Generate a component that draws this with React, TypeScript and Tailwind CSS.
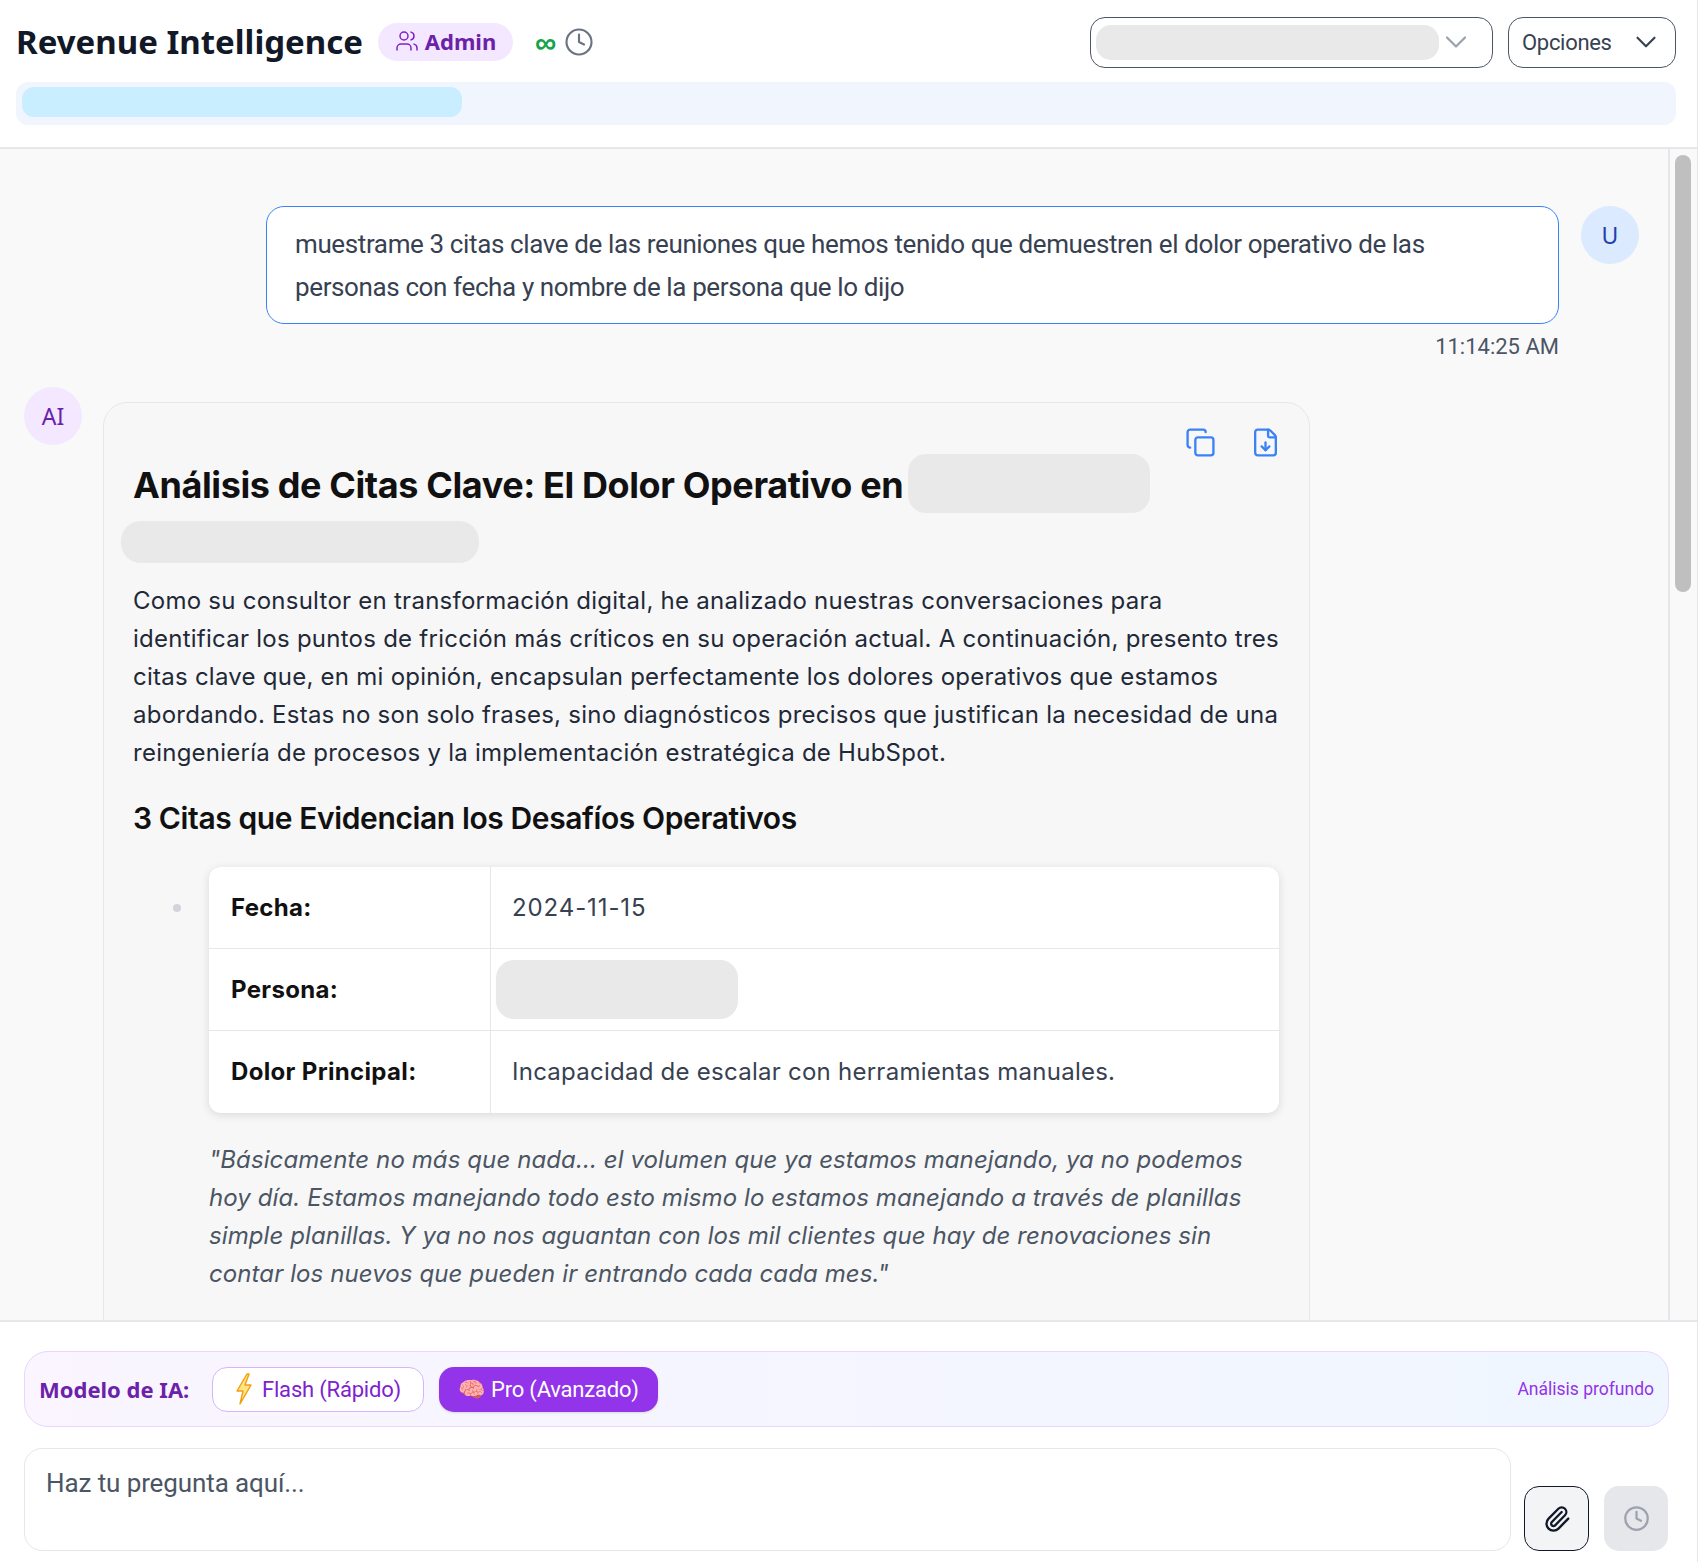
import { Users, ChevronDown, Clock, Paperclip, Copy, FileDown } from "lucide-react";

const ui = "font-['Noto_Sans',sans-serif]";
const narrow = "font-['Roboto',sans-serif]";

function Blur({ className }: { className: string }) {
  return <span className={`inline-block align-middle bg-[#e9e9e9] ${className}`} />;
}

function Row({ label, last, children }: { label: string; last?: boolean; children: React.ReactNode }) {
  return (
    <div className={`flex h-[82px] ${last ? "" : "border-b border-[#e5e7eb]"}`}>
      <div className="w-[282px] shrink-0 border-r border-[#e5e7eb] pl-[22px] flex items-center font-bold tracking-[0.014em] text-[#111111]">{label}</div>
      <div className="flex-1 flex items-center pl-[21px] text-[#374151]">{children}</div>
    </div>
  );
}

export default function App() {
  return (
    <div className="h-[1562px] w-[1698px] flex flex-col overflow-hidden bg-white rounded-tl-[12px] border-r border-[#e5e7eb]">
      <header className="h-[149px] shrink-0 border-b-2 border-[#e5e7eb] pl-4 pr-[21px] pt-[17px] flex flex-col gap-[15px]">
        <div className="flex items-center justify-between h-[50px]">
          <div className={`flex items-center ${ui}`}>
            <h1 className="text-[33px] font-bold text-[#111827]">Revenue Intelligence</h1>
            <span className="ml-[15px] h-[38px] w-[135px] rounded-full bg-[#f3e8ff] text-[#6b21a8] flex items-center justify-center gap-[6px] text-[22px] leading-[30px] font-bold pb-[2px]">
              <Users className="w-[24px] h-[24px] text-[#7e22ce]" strokeWidth={1.5} />Admin
            </span>
            <span className="ml-[22px] text-[#16a34a] text-[30px] leading-[30px] font-bold">∞</span>
            <Clock className="ml-[8px] w-[30px] h-[30px] text-[#6b7280]" strokeWidth={1.7} />
          </div>
          <div className={`flex items-center gap-[15px] ${ui}`}>
            <div className="w-[403px] h-[51px] border border-[#4b5563] rounded-[15px] flex items-center pl-[5px]">
              <Blur className="w-[343px] h-[35px] rounded-[15px]" />
              <ChevronDown className="-ml-[1px] w-[36px] h-[36px] text-[#9ca3af]" strokeWidth={1.5} />
            </div>
            <div className="w-[168px] h-[51px] border border-[#4b5563] rounded-[15px] flex items-center justify-between pl-[13px] pr-[12px] text-[22px] tracking-[-0.3px] text-[#374151]">
              <span className={narrow}>Opciones</span>
              <ChevronDown className="w-[34px] h-[34px] text-[#374151]" strokeWidth={1.5} />
            </div>
          </div>
        </div>
        <div className="h-[43px] rounded-[12px] bg-[#f0f5fe] pl-[6px] pt-[5px]">
          <div className="w-[440px] h-[30px] rounded-[12px] bg-[#c9eeff]" />
        </div>
      </header>

      <div className="flex-1 min-h-0 flex bg-[#f9f9fa]">
        <main className="flex-1 min-w-0 overflow-hidden pt-[57px]">
          <div className="flex justify-end pr-[29px] gap-[22px]">
            <div className={`w-[1293px] ${ui}`}>
              <div className={`h-[118px] rounded-[18px] border border-[#3b82f6] bg-white px-[28px] py-[16px] text-[26px] tracking-[-0.38px] leading-[43px] text-[#374151] ${narrow}`}>
                muestrame 3 citas clave de las reuniones que hemos tenido que demuestren el dolor operativo de las personas con fecha y nombre de la persona que lo dijo
              </div>
              <div className={`text-right text-[22px] text-[#4b5563] mt-[8px] leading-[30px] ${narrow}`}>11:14:25 AM</div>
            </div>
            <div className={`w-[58px] h-[58px] rounded-full bg-[#dbeafe] text-[#1e40af] flex items-center justify-center text-[23px] ${ui}`}>U</div>
          </div>

          <div className="flex pl-[24px] gap-[21px] mt-[25px]">
            <div className={`w-[58px] h-[58px] shrink-0 rounded-full bg-[#f3e8ff] text-[#6b21a8] flex items-center justify-center text-[23px] ${ui}`}>AI</div>
            <article className="relative w-[1207px] h-[1000px] mt-[15px] rounded-t-[24px] border border-[#e5e7eb] bg-[#f7f7f8] pl-[29px] pr-[27px] pt-[48px] font-['Inter',sans-serif] text-[24px] leading-[38px] tracking-[0.0105em] text-[#1f2937]">
              <div className="absolute right-[28px] top-[24px] flex gap-[34px] text-[#3b82f6]">
                <Copy className="w-[31px] h-[31px]" strokeWidth={1.8} />
                <FileDown className="w-[31px] h-[31px]" strokeWidth={1.8} />
              </div>
              <h2 className="text-[36px] leading-[68px] font-bold tracking-[-0.011em] text-[#111111] h-[68px]">
                Análisis de Citas Clave: El Dolor Operativo en <Blur className="w-[242px] h-[59px] rounded-[18px] -ml-[3px] -mt-[10px]" />
              </h2>
              <div className="-ml-[12px] mt-[2px] h-[42px] w-[358px] rounded-[20px] bg-[#e9e9e9]" />
              <p className="mt-[19px] text-[#1f2937]">
                Como su consultor en transformación digital, he analizado nuestras conversaciones para<br />
                identificar los puntos de fricción más críticos en su operación actual. A continuación, presento tres<br />
                citas clave que, en mi opinión, encapsulan perfectamente los dolores operativos que estamos<br />
                abordando. Estas no son solo frases, sino diagnósticos precisos que justifican la necesidad de una<br />
                reingeniería de procesos y la implementación estratégica de HubSpot.
              </p>
              <h3 className="mt-[25px] text-[30px] leading-[42px] font-semibold tracking-[-0.013em] text-[#111111]">3 Citas que Evidencian los Desafíos Operativos</h3>
              <div className="relative ml-[76px] mr-[3px] mt-[28px]">
                <div className="absolute -left-[36px] top-[37px] w-[8px] h-[8px] rounded-full bg-[#d1d5db]" />
                <div className="rounded-[12px] bg-white shadow-[0_2px_10px_rgba(0,0,0,0.12)] overflow-hidden">
                  <Row label="Fecha:"><span className="tracking-[0.9px]">2024-11-15</span></Row>
                  <Row label="Persona:"><Blur className="w-[242px] h-[59px] rounded-[18px] -ml-[16px]" /></Row>
                  <Row label="Dolor Principal:" last>Incapacidad de escalar con herramientas manuales.</Row>
                </div>
                <p className="mt-[28px] italic tracking-[0.1px] text-[#4b5563]">
                  "Básicamente no más que nada... el volumen que ya estamos manejando, ya no podemos hoy día. Estamos manejando todo esto mismo lo estamos manejando a través de planillas simple planillas. Y ya no nos aguantan con los mil clientes que hay de renovaciones sin contar los nuevos que pueden ir entrando cada cada mes."
                </p>
              </div>
            </article>
          </div>
        </main>
        <div className="w-[29px] shrink-0 border-l-2 border-[#e5e7eb] pl-[5px] pt-[6px]">
          <div className="w-[16px] h-[437px] rounded-full bg-[#bfbfbf]" />
        </div>
      </div>

      <footer className={`h-[242px] shrink-0 border-t-2 border-[#e5e7eb] bg-white pt-[29px] pl-[24px] pr-[28px] ${ui}`}>
        <div className="h-[76px] rounded-[24px] border border-[#e9d5ff] bg-gradient-to-r from-[#faf5ff] to-[#eff6ff] pl-[14px] pr-[14px] flex items-center">
          <span className="w-[172px] text-[22px] font-bold text-[#6b21a8]">Modelo de IA:</span>
          <span className={`ml-[1px] w-[212px] h-[45px] rounded-[15px] border border-[#d8b4fe] bg-white text-[#7e22ce] text-[22px] tracking-[-0.2px] flex items-center justify-center gap-[9px] ${narrow}`}>
            <svg viewBox="0 0 18 32" className="w-[18px] h-[32px]"><path d="M12 1 L2 18 H8 L5 31 L16 12 H10 L14 1 Z" fill="#fde68a" stroke="#f59e0b" strokeWidth="1.4" strokeLinejoin="round" /></svg>
            Flash (Rápido)
          </span>
          <span className={`ml-[15px] w-[219px] h-[45px] rounded-[15px] bg-[#9333ea] text-white text-[22px] tracking-[-0.2px] flex items-center justify-center gap-[6px] shadow-sm ${narrow}`}><span>🧠</span>Pro (Avanzado)</span>
          <span className={`ml-auto text-[17.5px] text-[#9333ea] ${narrow}`}>Análisis profundo</span>
        </div>
        <div className="flex items-end mt-[21px]">
          <div className={`w-[1487px] h-[103px] rounded-[18px] border border-[#e5e7eb] bg-white px-[21px] py-[16px] text-[26px] tracking-[-0.1px] text-[#4b5563] leading-[36px] ${narrow}`}>Haz tu pregunta aquí...</div>
          <button className="ml-[13px] w-[65px] h-[65px] rounded-[15px] border border-[#111827] bg-[#f3f4f6] flex items-center justify-center text-[#111827]">
            <Paperclip className="w-[28px] h-[28px]" strokeWidth={2} />
          </button>
          <button className="ml-[15px] w-[64px] h-[65px] rounded-[15px] bg-[#e5e7eb] flex items-center justify-center text-[#9ca3af]">
            <Clock className="w-[27px] h-[27px]" strokeWidth={2} />
          </button>
        </div>
      </footer>
    </div>
  );
}
